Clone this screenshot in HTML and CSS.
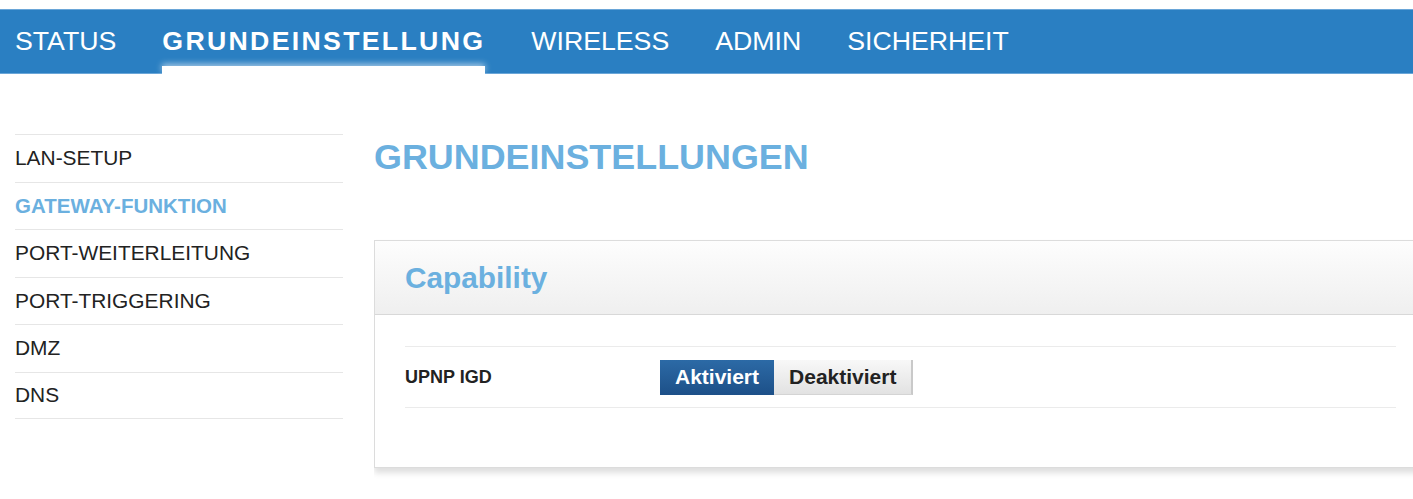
FILE: index.html
```html
<!DOCTYPE html>
<html lang="de">
<head>
    <meta charset="UTF-8">
    <title>Grundeinstellungen</title>
    <link rel="stylesheet" href="styles.css">
</head>
<body>

<div class="topbar">
    <a class="tab">STATUS</a>
    <a class="tab active">GRUNDEINSTELLUNG</a>
    <a class="tab">WIRELESS</a>
    <a class="tab">ADMIN</a>
    <a class="tab">SICHERHEIT</a>
</div>

<div class="layout">
    <ul class="sidemenu">
        <li>LAN-SETUP</li>
        <li class="current">GATEWAY-FUNKTION</li>
        <li>PORT-WEITERLEITUNG</li>
        <li>PORT-TRIGGERING</li>
        <li>DMZ</li>
        <li>DNS</li>
    </ul>

    <div class="main">
        <h1 class="page-title">GRUNDEINSTELLUNGEN</h1>

        <div class="panel">
            <div class="panel-head">
                <h2>Capability</h2>
            </div>
            <div class="panel-body">
                <div class="row">
                    <span class="row-label">UPNP IGD</span>
                    <div class="switch">
                        <button class="opt on">Aktiviert</button>
                        <button class="opt">Deaktiviert</button>
                    </div>
                </div>
            </div>
        </div>
    </div>
</div>

</body>
</html>
```

FILE: styles.css
```css
body {
    margin: 0;
    font-family: "Liberation Sans", Arial, sans-serif;
    color: #222;
    background: #fff;
}
.topbar {
    margin-top: 9px;
    height: 63px;
    display: flex;
    gap: 46px;
    padding-left: 15px;
    background-color: #2a7fc2;
    border-top: 1px solid #6aa6d8;
    border-bottom: 1px solid #6aa6d8;
}
.tab {
    position: relative;
    display: flex;
    align-items: center;
    color: #fff;
    font-size: 26.7px;
    text-decoration: none;
}
.tab.active {
    font-weight: bold;
    letter-spacing: 2.3px;
}
.tab.active::after {
    content: "";
    position: absolute;
    left: 0;
    right: 0;
    bottom: -1px;
    height: 8px;
    background: #fff;
    box-shadow: 0 -2px 6px rgba(255, 255, 255, 0.6);
}
.layout {
    display: flex;
    gap: 31px;
    padding-left: 15px;
    padding-top: 60px;
}
.sidemenu {
    list-style: none;
    margin: 0;
    padding: 0;
    width: 328px;
    flex-shrink: 0;
}
.sidemenu li {
    box-sizing: border-box;
    height: 47.5px;
    display: flex;
    align-items: center;
    font-size: 20.9px;
    border-top: 1px solid #e6e6e6;
}
.sidemenu li:last-child {
    border-bottom: 1px solid #e6e6e6;
}
.sidemenu li.current {
    color: #6bb0df;
    font-weight: bold;
    font-size: 20.5px;
}
.main {
    flex: 1;
    overflow: hidden;
    padding-bottom: 20px;
}
.page-title {
    margin: 3px 0 0;
    font-size: 35.9px;
    line-height: 41px;
    color: #6bb0df;
}
.panel {
    margin-top: 62px;
    margin-right: -14px;
    border: 1px solid #dcdcdc;
    background: #fff;
    box-shadow: 0 5px 6px rgba(0, 0, 0, 0.13);
}
.panel-head {
    height: 73px;
    display: flex;
    align-items: center;
    padding: 0 30px;
    background: linear-gradient(#fdfdfd, #efefef);
    border-bottom: 1px solid #d8d8d8;
}
.panel-head h2 {
    margin: 0;
    font-size: 29.8px;
    color: #6bb0df;
}
.panel-body {
    padding: 31px 30px 59px;
}
.row {
    box-sizing: border-box;
    height: 62px;
    display: flex;
    align-items: center;
    border-top: 1px solid #ebebeb;
    border-bottom: 1px solid #ebebeb;
}
.row-label {
    width: 255px;
    font-size: 18px;
    font-weight: bold;
}
.switch {
    display: flex;
}
.opt {
    height: 35px;
    padding: 0 15px;
    font-family: "Liberation Sans", Arial, sans-serif;
    font-size: 21px;
    font-weight: bold;
    color: #222;
    border: none;
    background: linear-gradient(#f8f8f8, #e2e2e2);
    border-right: 2px solid #c9c9c9;
    border-bottom: 1px solid #d4d4d4;
}
.opt.on {
    color: #fff;
    background: linear-gradient(#2c6aa6, #1d5088);
    border: none;
}
```
